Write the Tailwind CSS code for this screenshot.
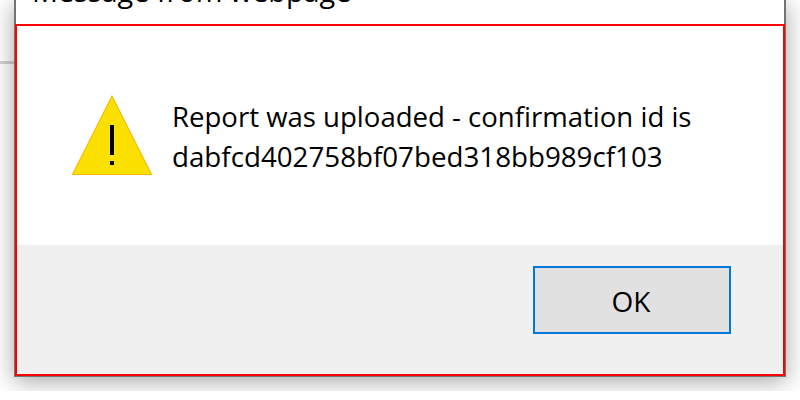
<!DOCTYPE html>
<html lang="en">
<head>
<meta charset="utf-8">
<title>Message from webpage</title>
<script src="https://cdn.jsdelivr.net/npm/@tailwindcss/browser@4"></script>
</head>
<body class="h-[400px] w-[800px] overflow-hidden bg-white font-['Open_Sans','Noto_Sans',sans-serif] text-black">
<div class="relative h-[391px] overflow-hidden">
  <div class="absolute left-0 top-[61px] h-[3px] w-[20px] bg-[#d2d2d2]"></div>
  <div class="relative ml-[14px] h-[377px] w-[772px] border-x-2 border-b-2 border-[#737373] bg-white shadow-[0_4px_22px_rgba(0,0,0,0.36)]">
    <header class="h-6 overflow-hidden pl-4">
      <h1 class="-mt-[29px] w-max origin-left scale-x-[1.029] text-[28px] leading-[40px] whitespace-nowrap">Message from webpage</h1>
    </header>
    <main class="-mx-px flex h-[352px] flex-col border-2 border-[#ff0000]">
      <section class="flex h-[219px] shrink-0 pl-[54px] pt-[69px]">
        <svg class="h-[82px] w-[82px] shrink-0" viewBox="0 0 82 82">
          <path d="M41 1.2 L80.5 79.5 H1.5 Z" fill="#fce100" stroke="#ffb900" stroke-width="1.2"/>
          <path d="M39 30h4v30h-4zM39 66h4v4h-4z" fill="#000"/>
        </svg>
        <div class="ml-[19px] pt-px text-[28px] leading-[40px] whitespace-nowrap">
          <p class="w-max origin-left scale-x-[0.984]">Report was uploaded - confirmation id is</p>
          <p class="w-max origin-left scale-x-[0.99]">dabfcd402758bf07bed318bb989cf103</p>
        </div>
      </section>
      <footer class="flex grow items-start justify-end bg-[#f0f0f0] pr-[52px] pt-[21px]">
        <button class="flex h-[68px] w-[198px] items-center justify-center border-2 border-[#0078d7] bg-[#e1e1e1] pt-0.5 pr-0.5 text-[28px]"><span>OK</span></button>
      </footer>
    </main>
  </div>
</div>
</body>
</html>
